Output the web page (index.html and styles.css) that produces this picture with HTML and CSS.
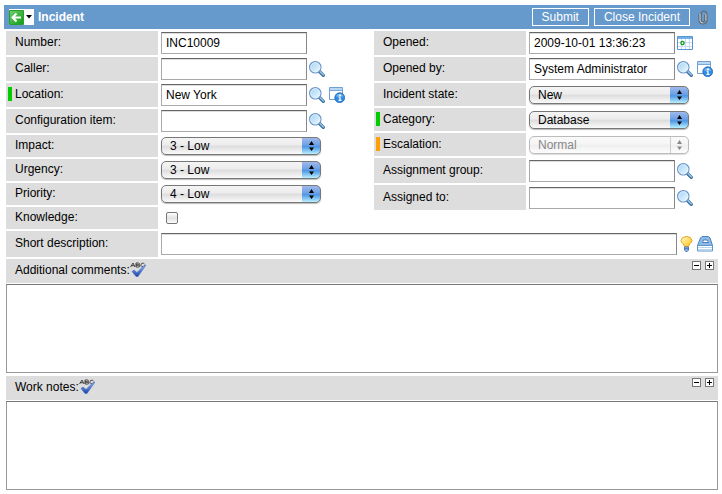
FILE: index.html
```html
<!DOCTYPE html>
<html lang="en">
<head>
<meta charset="utf-8">
<title>Incident</title>
<link rel="stylesheet" href="styles.css">
</head>
<body>
<svg class="defs" aria-hidden="true">
  <defs>
    <linearGradient id="glass" x1="0" y1="0" x2="1" y2="1"><stop offset="0" stop-color="#9fd0f4"/><stop offset="1" stop-color="#f0fcff"/></linearGradient>
    <linearGradient id="green" x1="0" y1="0" x2="1" y2="1"><stop offset="0" stop-color="#6fd06c"/><stop offset="1" stop-color="#0f9a16"/></linearGradient>
    <linearGradient id="blue" x1="0" y1="0" x2="0" y2="1"><stop offset="0" stop-color="#8fb6f5"/><stop offset="1" stop-color="#1b45a8"/></linearGradient>
    <linearGradient id="bulb" x1="0" y1="0" x2="1" y2="1"><stop offset="0" stop-color="#fffbd0"/><stop offset="1" stop-color="#ffc20e"/></linearGradient>
    <symbol id="search" viewBox="0 0 16 16">
      <path d="M10.5 10.500l3.800 3.800" stroke="#35658f" stroke-width="3.200" stroke-linecap="round"/>
      <path d="M10.800 10.400l3.600 3.600" stroke="#8fc4ee" stroke-width="1.600" stroke-linecap="round"/>
      <circle cx="6.300" cy="6.300" r="5.700" fill="url(#glass)" stroke="#6c94c8" stroke-width="1.200"/>
      <circle cx="6.300" cy="6.300" r="4.600" fill="none" stroke="#e3f4ff" stroke-width=".8"/>
    </symbol>
    <symbol id="info" viewBox="0 0 16 16">
      <path d="M.5.500h13v12H.5z" fill="#fff" stroke="#6f9fd2"/>
      <path d="M1 1h12v2.500H1z" fill="#b9d6f3"/>
      <path d="M.5 3.500h13" stroke="#7aa6d8"/>
      <circle cx="10.700" cy="10.700" r="4.900" fill="#2f8de4" stroke="#1c62b4" stroke-width=".8"/>
      <path d="M7 9.500a4 4 0 0 1 7.400 0z" fill="#7dbcf7"/>
      <path d="M9.500 10h1.500v3M9.500 13.300h3" stroke="#fff" stroke-width="1.200" fill="none"/><circle cx="11" cy="8.200" r=".9" fill="#fff"/>
    </symbol>
    <symbol id="arrows" viewBox="0 0 7 12">
      <path d="M3.500 1L6 5H1zM3.500 11L6 7.500H1z" fill="currentColor"/>
    </symbol>
    <symbol id="spell" viewBox="0 0 16 16">
      <path d="M.5 5L3 1 5 5M1.200 3.700h3M6 5V1h2.500q1 .2 1 1t-1 1H6h3q1 .2 1 1t-1 1zM14.500 2q-1-1.200-2.500-.7-1.500.7-1 2.400.9 1.700 2.500 1 .8-.3 1-1" fill="none" stroke="#333" stroke-width=".9"/>
      <path d="M2 9.500l2-1.500 3 2.500L14 3.500l2-.5-8 11.500H6z" fill="url(#blue)" stroke="#4269bd" stroke-width=".6"/>
    </symbol>
  </defs>
</svg>
<form class="page">
  <header class="titlebar">
    <button type="button" class="back" aria-label="Back">
      <svg width="15" height="15" viewBox="0 0 15 15"><path d="M.5.500h14v14H.5z" fill="url(#green)" stroke="#2b9d2c"/><path d="M12 7.500H4M7.500 3.500l-4 4 4 4" fill="none" stroke="#fff" stroke-width="2"/></svg>
      <svg width="6" height="4" viewBox="0 0 6 4"><path d="M0 0h6L3 3.500z" fill="#000"/></svg>
    </button>
    <h1>Incident</h1>
    <div class="actions">
      <button type="submit" class="action">Submit</button>
      <button type="button" class="action">Close Incident</button>
    </div>
    <button type="button" class="clip" aria-label="Attachments"><svg width="10" height="15" viewBox="0 0 10 15"><path d="M1 4v6.500q.5 3.500 4 3.500t4-3.500V4Q8.500 1 6 1T3.200 4v6q.2 1.800 1.800 1.800T6.800 10V4.500" fill="none" stroke="#666" stroke-width="1.200"/><path d="M2 4v6.500q.4 2.500 3 2.500M7.900 4v6.500" fill="none" stroke="#ddd" stroke-width=".8"/></svg></button>
  </header>

  <div class="columns">
    <div class="column">
      <div class="row"><label for="number">Number:</label><input type="text" id="number" value="INC10009"></div>
      <div class="row"><label for="caller">Caller:</label><input type="text" id="caller"><button type="button" class="icon" aria-label="Look up caller"><svg><use href="#search"/></svg></button></div>
      <div class="row"><label for="location" class="mandatory">Location:</label><input type="text" id="location" value="New York"><button type="button" class="icon" aria-label="Look up location"><svg><use href="#search"/></svg></button><button type="button" class="icon next" aria-label="Location details"><svg><use href="#info"/></svg></button></div>
      <div class="row"><label for="ci">Configuration item:</label><input type="text" id="ci"><button type="button" class="icon" aria-label="Look up configuration item"><svg><use href="#search"/></svg></button></div>
      <div class="row short"><label for="impact">Impact:</label><span class="popup"><select id="impact"><option>3 - Low</option></select><svg><use href="#arrows"/></svg></span></div>
      <div class="row short"><label for="urgency">Urgency:</label><span class="popup"><select id="urgency"><option>3 - Low</option></select><svg><use href="#arrows"/></svg></span></div>
      <div class="row short"><label for="priority">Priority:</label><span class="popup"><select id="priority"><option>4 - Low</option></select><svg><use href="#arrows"/></svg></span></div>
      <div class="row short"><label for="knowledge">Knowledge:</label><input type="checkbox" id="knowledge"></div>
    </div>
    <div class="column">
      <div class="row"><label for="opened">Opened:</label><input type="text" id="opened" value="2009-10-01 13:36:23"><button type="button" class="icon" aria-label="Pick date"><svg viewBox="0 0 16 16"><path d="M.5 1.500h15v13H.5z" fill="#fff" stroke="#5794d2"/><path d="M1 2h14v2H1z" fill="#73afe8"/><path d="M4.500 4v10M8.500 4v10M12.500 4v10M1 7.500h14M1 11.500h14" stroke="#c3dcf3"/><circle cx="5.500" cy="8" r="1.600" fill="#fff" stroke="#159a20" stroke-width="1.400"/></svg></button></div>
      <div class="row"><label for="openedby">Opened by:</label><input type="text" id="openedby" value="System Administrator"><button type="button" class="icon" aria-label="Look up opened by"><svg><use href="#search"/></svg></button><button type="button" class="icon next" aria-label="Opened by details"><svg><use href="#info"/></svg></button></div>
      <div class="row medium"><label for="state">Incident state:</label><span class="popup"><select id="state"><option>New</option></select><svg><use href="#arrows"/></svg></span></div>
      <div class="row medium"><label for="category" class="mandatory">Category:</label><span class="popup"><select id="category"><option>Database</option></select><svg><use href="#arrows"/></svg></span></div>
      <div class="row medium"><label for="escalation" class="changed">Escalation:</label><span class="popup disabled"><select id="escalation" disabled><option>Normal</option></select><svg><use href="#arrows"/></svg></span></div>
      <div class="row tall"><label for="group">Assignment group:</label><input type="text" id="group"><button type="button" class="icon" aria-label="Look up group"><svg><use href="#search"/></svg></button></div>
      <div class="row tall"><label for="assigned">Assigned to:</label><input type="text" id="assigned"><button type="button" class="icon" aria-label="Look up assignee"><svg><use href="#search"/></svg></button></div>
    </div>
  </div>

  <div class="row wide"><label for="summary">Short description:</label><input type="text" id="summary"><button type="button" class="icon" aria-label="Suggestions"><svg viewBox="0 0 16 16"><path d="M5.500 10.500Q5.300 9 3.800 7.500 2 6 2 4.500 2.800.5 7.500.5T13 4.500q0 1.500-1.800 3-1.500 1.500-1.700 3z" fill="url(#bulb)" stroke="#e3a21b"/><path d="M5.500 11h4v3l-1.200 1.500H6.700L5.500 14z" fill="#9fc2ea" stroke="#4378b9" stroke-width=".9"/><path d="M5.500 12.800h4" stroke="#3568aa"/></svg></button><button type="button" class="icon next" aria-label="Knowledge base"><svg viewBox="0 0 16 16"><path d="M5 .5h6.500L13 2l2.500 7.500H.5L3.500 2z" fill="#8dbbe8" stroke="#4b80bb"/><path d="M5.500 6.500L6.500 4h3.500l1.500 2.500z" fill="#fff" stroke="#386ba6" stroke-width=".8"/><path d="M.5 9.500h15v5.500H.5z" fill="#fff" stroke="#5e96d0"/><path d="M1 11.500h14M1 13.500h14" stroke="#a9cbea" stroke-width=".8"/></svg></button></div>

  <section class="journal">
    <div class="heading"><label for="comments">Additional comments:</label><svg class="spell"><use href="#spell"/></svg>
      <span class="sizers"><button type="button" aria-label="Shrink comments"><svg viewBox="0 0 7 7"><path d="M1 3.500h5" stroke="#000"/></svg></button><button type="button" aria-label="Enlarge comments"><svg viewBox="0 0 7 7"><path d="M1 3.500h5M3.500 1v5" stroke="#000"/></svg></button></span></div>
    <textarea id="comments"></textarea>
  </section>
  <section class="journal">
    <div class="heading"><label for="notes">Work notes:</label><svg class="spell"><use href="#spell"/></svg>
      <span class="sizers"><button type="button" aria-label="Shrink notes"><svg viewBox="0 0 7 7"><path d="M1 3.500h5" stroke="#000"/></svg></button><button type="button" aria-label="Enlarge notes"><svg viewBox="0 0 7 7"><path d="M1 3.500h5M3.500 1v5" stroke="#000"/></svg></button></span></div>
    <textarea id="notes"></textarea>
  </section>
</form>
</body>
</html>
```
FILE: styles.css
```css
* { box-sizing: border-box; }
body, input, select, button, textarea, h1 {
  font: 12px/16px "Liberation Sans", Arial, sans-serif;
  margin: 0;
}
body { background: #fff; color: #000; }
svg { display: block; flex: none; }
.defs { position: absolute; width: 0; height: 0; }
button { border: 0; padding: 0; background: none; }

.page { padding: 5px 4px 4px 6px; }

.titlebar {
  display: flex;
  align-items: center;
  gap: 4px;
  height: 24px;
  margin: 0 2px 2px -2px;
  padding: 0 8px 0 5px;
  background: #6699cc;
  color: #fff;
}
.titlebar h1 { flex: 1; font-weight: bold; }
.back {
  display: flex;
  align-items: center;
  gap: 2px;
  width: 25px;
  height: 16px;
  background: #fff;
}
.actions { display: flex; gap: 5px; }
.action {
  height: 18px;
  padding: 0 9px;
  border: 1px solid #fff;
  color: #fff;
}
.clip { padding: 0 0 0 4px; }

.columns { display: grid; grid-template-columns: 368fr 344fr; }

.row {
  display: flex;
  align-items: center;
  height: 24px;
  margin-bottom: 2px;
}
.row.short { height: 22px; }
.row.medium { height: 23px; }
.row.tall { height: 25px; }
.row.wide { height: 26px; padding-right: 5px; }
.row label {
  display: flex;
  align-items: center;
  align-self: stretch;
  flex: none;
  width: 152px;
  margin-right: 3px;
  padding: 0 0 2px 9px;
  background: #ddd;
}
.row .mandatory, .row .changed { padding-left: 2px; }
.mandatory::before, .changed::before {
  content: "";
  width: 4px;
  height: 14px;
  margin-right: 3px;
  background: #00cc00;
}
.changed::before { background: #ffa000; }

input[type="text"] {
  width: 146px;
  height: 22px;
  padding: 0 4px;
  border: 1px solid #aaa;
  border-top: 1px solid #666;
  border-right-color: #888;
  background: #fff;
  box-shadow: inset 0 1px #ddd;
  color: #000;
}
.wide input[type="text"] { flex: 1; width: auto; }
.icon { flex: none; margin-left: 2px; }
.icon.next { margin-left: 4px; }
.icon svg { width: 16px; height: 16px; }
.wide .icon.next { margin-left: 2px; }

.popup {
  display: grid;
  align-items: center;
  width: 160px;
  height: 18px;
  border: 1px solid #777;
  border-radius: 5px;
  background:
    linear-gradient(#9fb9ea, #6c9fe4 45%, #4f96e2 55%, #b8f0ff) right / 18px 100% no-repeat,
    linear-gradient(#f4f4f4, #ececec 45%, #dcdcdc 50%, #fafafa);
  box-shadow: 0 1px 1px #bbb;
}
.popup select, .popup svg { grid-area: 1 / 1; }
.popup select {
  appearance: none;
  height: 16px;
  padding: 0 20px 0 8px;
  border: 0;
  background: none;
  color: #000;
}
.popup svg {
  justify-self: end;
  width: 7px;
  height: 12px;
  margin-right: 5px;
  pointer-events: none;
}
.popup.disabled {
  border-color: #bbb;
  background:
    linear-gradient(#ccc, #ccc) right 17px top / 1px 100% no-repeat,
    linear-gradient(#fafafa, #f5f5f5 45%, #eee 50%, #fdfdfd);
  box-shadow: 0 1px 1px #ddd;
  color: #888;
}
.popup.disabled select { color: #888; opacity: 1; }

input[type="checkbox"] {
  appearance: none;
  width: 12px;
  height: 12px;
  margin-left: 5px;
  border: 1px solid #777;
  border-radius: 2px;
  background: linear-gradient(#fff, #e2e2e2 50%, #fafafa);
}

.journal { margin-bottom: 3px; }
.heading {
  display: flex;
  height: 24px;
  margin-bottom: 1px;
  padding: 2px 4px 0 9px;
  background: #ddd;
}
.heading label { padding-top: 1px; }
.spell { width: 16px; height: 16px; margin-top: 1px; }
.sizers { display: flex; gap: 4px; margin-left: auto; }
.sizers button {
  width: 9px;
  height: 9px;
  border: 1px solid #777;
  background: #fff;
}
.sizers svg { width: 7px; height: 7px; }
textarea {
  display: block;
  width: 100%;
  height: 89px;
  border: 1px solid #999;
  border-top-color: #777;
  resize: none;
}
```
